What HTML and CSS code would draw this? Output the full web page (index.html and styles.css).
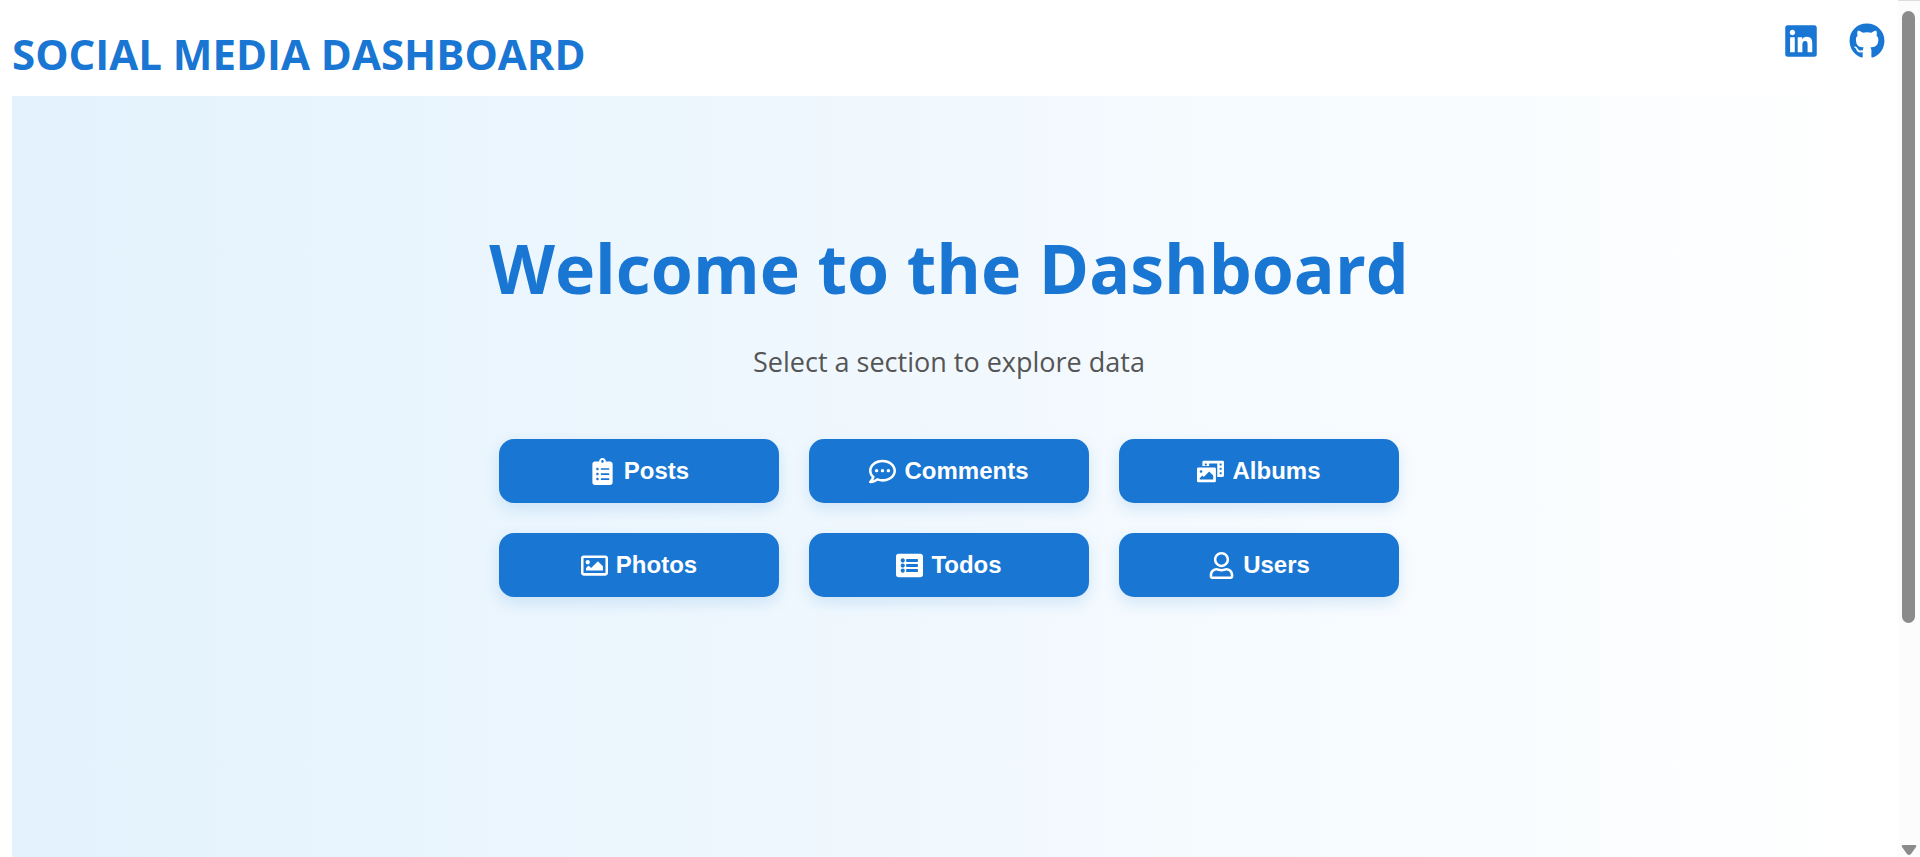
FILE: index.html
```html
<!DOCTYPE html>
<html lang="en">
<head>
<meta charset="utf-8">
<meta name="viewport" content="width=device-width, initial-scale=1">
<title>Social Media Dashboard</title>
<link rel="stylesheet" href="styles.css">
</head>
<body>
<div class="page">
  <header class="header">
    <h2 class="brand">SOCIAL MEDIA DASHBOARD</h2>
    <nav class="social">
      <a href="#linkedin" aria-label="LinkedIn"><svg class="social-icon" viewBox="0 0 448 512"><path d="M416 32H31.900C14.300 32 0 46.500 0 64.300v383.400C0 465.500 14.300 480 31.900 480H416c17.600 0 32-14.500 32-32.300V64.300c0-17.800-14.400-32.300-32-32.300zM135.400 416H69V202.200h66.500V416zm-33.200-243c-21.300 0-38.500-17.300-38.500-38.500S80.900 96 102.200 96c21.200 0 38.500 17.300 38.500 38.500 0 21.300-17.200 38.500-38.500 38.500zm282.100 243h-66.400V312c0-24.800-.5-56.700-34.500-56.700-34.600 0-39.900 27-39.900 54.900V416h-66.400V202.200h63.700v29.200h.9c8.900-16.800 30.600-34.500 62.900-34.500 67.200 0 79.700 44.300 79.700 101.900V416z"/></svg></a>
      <a href="#github" aria-label="GitHub"><svg class="social-icon" viewBox="0 0 496 512"><path d="M165.900 397.400c0 2-2.300 3.600-5.200 3.600-3.300.3-5.600-1.300-5.600-3.600 0-2 2.300-3.600 5.200-3.600 3-.3 5.600 1.300 5.600 3.600zm-31.100-4.500c-.7 2 1.300 4.300 4.300 4.900 2.600 1 5.600 0 6.200-2s-1.300-4.300-4.300-5.200c-2.600-.7-5.500.3-6.200 2.300zm44.200-1.700c-2.900.7-4.900 2.600-4.600 4.900.3 2 2.900 3.300 5.900 2.600 2.900-.7 4.900-2.600 4.600-4.600-.3-1.900-3-3.200-5.900-2.900zM244.800 8C106.100 8 0 113.300 0 252c0 110.900 69.800 205.800 169.500 239.200 12.800 2.300 17.300-5.600 17.300-12.100 0-6.200-.3-40.400-.3-61.400 0 0-70 15-84.700-29.800 0 0-11.400-29.100-27.800-36.600 0 0-22.900-15.700 1.600-15.400 0 0 24.900 2 38.600 25.800 21.900 38.600 58.600 27.500 72.900 20.900 2.300-16 8.800-27.100 16-33.700-55.900-6.200-112.300-14.300-112.300-110.500 0-27.500 7.600-41.300 23.600-58.900-2.600-6.500-11.100-33.300 2.600-67.900 20.900-6.500 69 27 69 27 20-5.600 41.500-8.500 62.800-8.500s42.800 2.900 62.800 8.500c0 0 48.100-33.600 69-27 13.700 34.700 5.200 61.400 2.600 67.900 16 17.700 25.800 31.500 25.800 58.900 0 96.500-58.900 104.200-114.800 110.500 9.200 7.900 17 22.900 17 46.400 0 33.700-.3 75.400-.3 83.600 0 6.500 4.600 14.400 17.300 12.100C428.200 457.800 496 362.900 496 252 496 113.300 383.500 8 244.800 8z"/></svg></a>
    </nav>
  </header>
  <main class="hero">
    <h1 class="title">Welcome to the Dashboard</h1>
    <p class="subtitle">Select a section to explore data</p>
    <div class="sections">
      <button class="section-button" type="button"><svg class="icon" viewBox="0 0 384 512"><path d="M336 64h-80c0-35.300-28.700-64-64-64s-64 28.700-64 64H48C21.500 64 0 85.500 0 112v352c0 26.500 21.500 48 48 48h288c26.500 0 48-21.500 48-48V112c0-26.500-21.500-48-48-48zM96 424c-13.300 0-24-10.700-24-24s10.700-24 24-24 24 10.700 24 24-10.700 24-24 24zm0-96c-13.300 0-24-10.700-24-24s10.700-24 24-24 24 10.700 24 24-10.700 24-24 24zm0-96c-13.300 0-24-10.700-24-24s10.700-24 24-24 24 10.700 24 24-10.700 24-24 24zm96-192c13.300 0 24 10.700 24 24s-10.700 24-24 24-24-10.700-24-24 10.700-24 24-24zm128 368c0 4.400-3.600 8-8 8H168c-4.400 0-8-3.600-8-8v-16c0-4.400 3.600-8 8-8h144c4.400 0 8 3.600 8 8v16zm0-96c0 4.400-3.600 8-8 8H168c-4.400 0-8-3.600-8-8v-16c0-4.400 3.600-8 8-8h144c4.400 0 8 3.600 8 8v16zm0-96c0 4.400-3.600 8-8 8H168c-4.400 0-8-3.600-8-8v-16c0-4.400 3.600-8 8-8h144c4.400 0 8 3.600 8 8v16z"/></svg>Posts</button>
      <button class="section-button" type="button"><svg class="icon" viewBox="0 0 512 512"><path d="M144 208c-17.700 0-32 14.300-32 32s14.300 32 32 32 32-14.300 32-32-14.300-32-32-32zm112 0c-17.700 0-32 14.300-32 32s14.300 32 32 32 32-14.300 32-32-14.300-32-32-32zm112 0c-17.700 0-32 14.300-32 32s14.300 32 32 32 32-14.300 32-32-14.300-32-32-32zM256 32C114.600 32 0 125.100 0 240c0 47.600 19.900 91.200 52.900 126.300C38 405.700 7 439.100 6.500 439.500c-6.600 7-8.400 17.200-4.600 26S14.400 480 24 480c61.500 0 110-25.700 139.100-46.300C192 442.800 223.200 448 256 448c141.400 0 256-93.100 256-208S397.400 32 256 32zm0 368c-26.700 0-53.100-4.100-78.400-12.100l-22.700-7.200-19.500 13.800c-14.300 10.100-33.900 21.400-57.500 29 7.300-12.100 14.400-25.700 19.900-40.200l10.600-28.100-20.600-21.800C69.700 314.100 48 282.200 48 240c0-88.200 93.300-160 208-160s208 71.800 208 160-93.300 160-208 160z"/></svg>Comments</button>
      <button class="section-button" type="button"><svg class="icon" viewBox="0 0 640 512"><path d="M608 0H160a32 32 0 0 0-32 32v96h160V64h192v320h128a32 32 0 0 0 32-32V32a32 32 0 0 0-32-32zM232 103a9 9 0 0 1-9 9h-30a9 9 0 0 1-9-9V73a9 9 0 0 1 9-9h30a9 9 0 0 1 9 9zm352 208a9 9 0 0 1-9 9h-30a9 9 0 0 1-9-9v-30a9 9 0 0 1 9-9h30a9 9 0 0 1 9 9zm0-104a9 9 0 0 1-9 9h-30a9 9 0 0 1-9-9v-30a9 9 0 0 1 9-9h30a9 9 0 0 1 9 9zm0-104a9 9 0 0 1-9 9h-30a9 9 0 0 1-9-9V73a9 9 0 0 1 9-9h30a9 9 0 0 1 9 9zm-168 57H32a32 32 0 0 0-32 32v288a32 32 0 0 0 32 32h384a32 32 0 0 0 32-32V192a32 32 0 0 0-32-32zM96 224a32 32 0 1 1-32 32 32 32 0 0 1 32-32zm288 224H64v-32l64-64 32 32 128-128 96 96z"/></svg>Albums</button>
      <button class="section-button" type="button"><svg class="icon" viewBox="0 0 512 512"><path d="M464 64H48C21.490 64 0 85.490 0 112v288c0 26.510 21.490 48 48 48h416c26.510 0 48-21.490 48-48V112c0-26.510-21.490-48-48-48zm-6 336H54a6 6 0 0 1-6-6V118a6 6 0 0 1 6-6h404a6 6 0 0 1 6 6v276a6 6 0 0 1-6 6zM128 152c-22.091 0-40 17.909-40 40s17.909 40 40 40 40-17.909 40-40-17.909-40-40-40zM96 352h320v-80l-87.515-87.515c-4.686-4.686-12.284-4.686-16.971 0L192 304l-39.515-39.515c-4.686-4.686-12.284-4.686-16.971 0L96 304v48z"/></svg>Photos</button>
      <button class="section-button" type="button"><svg class="icon" viewBox="0 0 512 512"><path d="M464 480H48c-26.510 0-48-21.490-48-48V80c0-26.510 21.490-48 48-48h416c26.510 0 48 21.490 48 48v352c0 26.510-21.490 48-48 48zM128 120c-22.091 0-40 17.909-40 40s17.909 40 40 40 40-17.909 40-40-17.909-40-40-40zm0 96c-22.091 0-40 17.909-40 40s17.909 40 40 40 40-17.909 40-40-17.909-40-40-40zm0 96c-22.091 0-40 17.909-40 40s17.909 40 40 40 40-17.909 40-40-17.909-40-40-40zm288-136v-32c0-6.627-5.373-12-12-12H204c-6.627 0-12 5.373-12 12v32c0 6.627 5.373 12 12 12h200c6.627 0 12-5.373 12-12zm0 96v-32c0-6.627-5.373-12-12-12H204c-6.627 0-12 5.373-12 12v32c0 6.627 5.373 12 12 12h200c6.627 0 12-5.373 12-12zm0 96v-32c0-6.627-5.373-12-12-12H204c-6.627 0-12 5.373-12 12v32c0 6.627 5.373 12 12 12h200c6.627 0 12-5.373 12-12z"/></svg>Todos</button>
      <button class="section-button" type="button"><svg class="icon" viewBox="0 0 448 512"><path d="M313.600 304c-28.700 0-42.500 16-89.600 16-47.100 0-60.800-16-89.600-16C60.200 304 0 364.200 0 438.400V464c0 26.500 21.500 48 48 48h352c26.500 0 48-21.500 48-48v-25.600c0-74.200-60.200-134.400-134.400-134.400zM400 464H48v-25.600c0-47.600 38.800-86.400 86.400-86.400 14.600 0 38.300 16 89.600 16 51.700 0 74.900-16 89.600-16 47.600 0 86.400 38.800 86.400 86.400V464zM224 288c79.500 0 144-64.500 144-144S303.500 0 224 0 80 64.500 80 144s64.500 144 144 144zm0-240c52.900 0 96 43.100 96 96s-43.100 96-96 96-96-43.100-96-96 43.100-96 96-96z"/></svg>Users</button>
    </div>
  </main>
</div>
<div class="scrollbar" aria-hidden="true">
  <div class="thumb"></div>
  <svg class="arrow" viewBox="0 0 16 12"><path d="M2 1h12q2 0 1 2l-5 7q-2 2-4 0L1 3Q0 1 2 1z"/></svg>
</div>
</body>
</html>
```
FILE: styles.css
```css
* {
  box-sizing: border-box;
}

body {
  margin: 0;
  background: #fff;
  font-family: "Segoe UI", "Open Sans", "Noto Sans", sans-serif;
}

.page {
  display: flex;
  flex-direction: column;
  min-height: 100vh;
  padding: 0 34px 0 12px;
}

.header {
  display: flex;
  justify-content: space-between;
  align-items: flex-start;
  height: 96px;
}

.brand {
  margin: 24px 0 0;
  color: #1976d2;
  font-size: 42px;
  line-height: 60px;
}

.social {
  display: flex;
  gap: 30px;
  padding: 23px 1px 0 0;
}

.social-icon {
  display: block;
  width: 36px;
  height: 36px;
  fill: #1976d2;
}

.hero {
  display: flex;
  flex: 1;
  flex-direction: column;
  align-items: center;
  padding: 124px 30px 60px;
  background: linear-gradient(to right, #e3f2fd, #fff);
  text-align: center;
}

.title {
  margin: 0;
  color: #1976d2;
  font-size: 68px;
  line-height: 96px;
}

.subtitle {
  margin: 26px 0 57px;
  color: #555;
  font-size: 27px;
  line-height: 40px;
}

.sections {
  display: grid;
  grid-template-columns: repeat(3, 280px);
  gap: 30px;
}

.section-button {
  display: flex;
  justify-content: center;
  align-items: center;
  gap: 8px;
  height: 64px;
  border: 0;
  border-radius: 15px;
  background: #1976d2;
  box-shadow: 0 6px 15px rgba(25, 118, 210, 0.15);
  color: #fff;
  font: bold 24px "Liberation Sans", Arial, sans-serif;
  cursor: pointer;
}

.icon {
  width: 27px;
  height: 27px;
  fill: #fff;
}

.scrollbar {
  position: fixed;
  top: 0;
  right: 0;
  bottom: 0;
  display: flex;
  flex-direction: column;
  justify-content: space-between;
  align-items: center;
  width: 22px;
  padding: 10px 1px 1px 0;
  border-top: 1px solid #ddd;
  background: #fcfcfc;
}

.thumb {
  width: 13px;
  height: 72%;
  min-height: 612px;
  border-radius: 7px;
  background: #8b8b8b;
}

.arrow {
  width: 16px;
  height: 12px;
  fill: #8b8b8b;
}
```
